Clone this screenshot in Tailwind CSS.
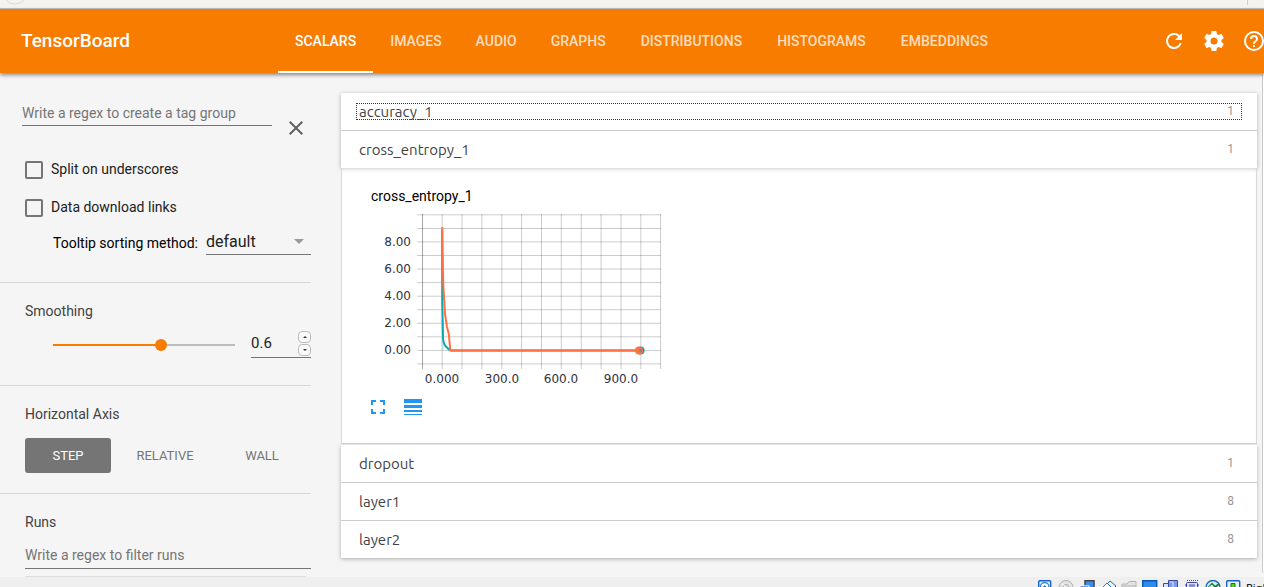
<!DOCTYPE html>
<html lang="en">
<head>
<meta charset="utf-8">
<title>TensorBoard</title>
<script src="https://cdn.jsdelivr.net/npm/@tailwindcss/browser@4"></script>
</head>
<body class="flex h-screen flex-col overflow-hidden bg-[#f5f5f5] font-[Roboto,sans-serif] text-sm text-[#212121]">
  <!-- browser chrome edge -->
  <div class="flex h-[9px] shrink-0 items-start justify-between overflow-hidden border-b border-[#c4c2be] bg-[#f4f3f1] pr-4 pl-1">
    <svg class="h-2 w-6" viewBox="0 0 24 8" fill="none" stroke="#dcdad7"><circle cx="11" cy="-8" r="12"/></svg>
    <span class="h-[5px] w-px bg-[#d0ceca]"></span>
  </div>

  <header class="relative z-10 flex h-16 shrink-0 bg-[#f77c00] text-white shadow-[0_2px_4px_rgba(0,0,0,0.45)]">
    <h1 class="flex w-[278px] shrink-0 items-center pl-[21px] text-[19px] font-medium">TensorBoard</h1>
    <nav class="flex font-medium text-white/75">
      <a href="#scalars" class="flex items-center border-b-2 border-white px-[17px] pt-0.5 text-white">SCALARS</a>
      <a href="#images" class="flex items-center px-[17px]">IMAGES</a>
      <a href="#audio" class="flex items-center px-[17px]">AUDIO</a>
      <a href="#graphs" class="flex items-center px-[17px]">GRAPHS</a>
      <a href="#distributions" class="flex items-center px-[18px]">DISTRIBUTIONS</a>
      <a href="#histograms" class="flex items-center px-[17px]">HISTOGRAMS</a>
      <a href="#embeddings" class="flex items-center px-[18px]">EMBEDDINGS</a>
    </nav>
    <div class="-mr-[10px] ml-auto flex items-center">
      <button aria-label="Reload" class="p-2"><svg class="size-6" viewBox="0 0 24 24" fill="currentColor"><path d="M17.65 6.35A7.96 7.96 0 0 0 12 4a8 8 0 1 0 7.73 10h-2.08A6 6 0 1 1 12 6c1.66 0 3.14.69 4.22 1.78L13 11h7V4z"/></svg></button>
      <button aria-label="Settings" class="p-2"><svg class="size-6" viewBox="0 0 24 24" fill="currentColor"><path d="M19.43 12.98c.04-.32.07-.64.07-.98s-.03-.66-.07-.98l2.11-1.65c.19-.15.24-.42.12-.64l-2-3.46c-.12-.22-.39-.3-.61-.22l-2.49 1c-.52-.4-1.08-.73-1.69-.98l-.38-2.65A.49.49 0 0 0 14 2h-4c-.25 0-.46.18-.49.42l-.38 2.65c-.61.25-1.17.59-1.69.98l-2.49-1c-.23-.09-.49 0-.61.22l-2 3.46c-.13.22-.07.49.12.64l2.11 1.65c-.04.32-.07.65-.07.98s.03.66.07.98l-2.11 1.65c-.19.15-.24.42-.12.64l2 3.46c.12.22.39.3.61.22l2.49-1c.52.4 1.08.73 1.69.98l.38 2.65c.03.24.24.42.49.42h4c.25 0 .46-.18.49-.42l.38-2.65c.61-.25 1.17-.59 1.69-.98l2.49 1c.23.09.49 0 .61-.22l2-3.46c.12-.22.07-.49-.12-.64zM12 15.5a3.5 3.5 0 1 1 0-7 3.5 3.5 0 0 1 0 7z"/></svg></button>
      <button aria-label="Help" class="p-2"><svg class="size-6" viewBox="0 0 24 24" fill="currentColor"><path d="M11 18h2v-2h-2zm1-16a10 10 0 1 0 0 20 10 10 0 0 0 0-20zm0 18a8 8 0 1 1 0-16 8 8 0 0 1 0 16zm0-14a4 4 0 0 0-4 4h2a2 2 0 1 1 4 0c0 2-3 1.75-3 5h2c0-2.25 3-2.5 3-5a4 4 0 0 0-4-4z"/></svg></button>
    </div>
  </header>

  <div class="flex min-h-0 flex-1">
    <aside class="w-[311px] shrink-0 overflow-hidden">
      <section class="h-[210px] border-b border-[#d8d8d8] pt-7">
        <div class="flex items-start pl-[22px]">
          <input aria-label="Tag group regex" placeholder="Write a regex to create a tag group" class="h-[25px] w-[250px] border-b border-[#757575] outline-none placeholder:text-[#757575]">
          <button aria-label="Clear" class="mt-[15px] ml-3"><svg class="size-6" viewBox="0 0 24 24" fill="#616161"><path d="M19 6.41 17.59 5 12 10.59 6.41 5 5 6.41 10.59 12 5 17.59 6.41 19 12 13.41 17.59 19 19 17.59 13.41 12z"/></svg></button>
        </div>
        <label class="mt-[21px] flex h-[18px] items-center gap-2 pl-[25px]"><input type="checkbox" class="size-[18px] appearance-none rounded-xs border-2 border-[#757575]"><span class="pb-0.5">Split on underscores</span></label>
        <label class="mt-5 flex h-[18px] items-center gap-2 pl-[25px]"><input type="checkbox" class="size-[18px] appearance-none rounded-xs border-2 border-[#757575]"><span class="pb-0.5">Data download links</span></label>
        <div class="mt-3 flex items-center pl-[53px]">
          <label for="sort" class="w-[153px] pt-0.5 text-black">Tooltip sorting method:</label>
          <div class="relative flex-1">
            <select id="sort" class="h-[26px] w-full appearance-none border-b border-[#757575] text-base leading-6 outline-none"><option>default</option></select>
            <svg class="pointer-events-none absolute top-0 right-0 size-6" viewBox="0 0 24 24" fill="#9a9a9a"><path d="m7 10 5 5 5-5z"/></svg>
          </div>
        </div>
      </section>

      <section class="h-[103px] border-b border-[#d8d8d8] pt-[18px]">
        <h3 class="pl-[25px] text-[#424242]">Smoothing</h3>
        <div class="mt-[9px] flex items-center gap-4 pl-[53px]">
          <input type="range" aria-label="Smoothing" min="0" max="1" step="0.1" value="0.6" class="mt-0.5 h-3 w-[182px] appearance-none bg-[linear-gradient(to_right,#f77c00_60%,#bdbdbd_60%)] bg-[length:100%_2px] bg-center bg-no-repeat [&::-webkit-slider-thumb]:size-3 [&::-webkit-slider-thumb]:appearance-none [&::-webkit-slider-thumb]:rounded-full [&::-webkit-slider-thumb]:bg-[#f77c00]">
          <div class="flex h-7 flex-1 items-center border-b border-[#757575]">
            <input type="number" aria-label="Smoothing value" value="0.6" step="0.1" class="w-0 flex-1 appearance-none text-[15px] outline-none [&::-webkit-inner-spin-button]:appearance-none">
            <div class="flex flex-col gap-px">
              <button aria-label="Increase" class="flex h-3 w-[13px] items-center justify-center rounded-sm border border-[#bdbdbd] bg-[#fafafa]"><svg class="h-1 w-1.5" viewBox="0 0 6 4" fill="#333"><path d="M3 1 5 3H1z"/></svg></button>
              <button aria-label="Decrease" class="flex h-3 w-[13px] items-center justify-center rounded-sm border border-[#bdbdbd] bg-[#fafafa]"><svg class="h-1 w-1.5" viewBox="0 0 6 4" fill="#333"><path d="M3 3 5 1H1z"/></svg></button>
            </div>
          </div>
        </div>
      </section>

      <section class="h-[108px] border-b border-[#d8d8d8] pt-[18px] pl-[25px]">
        <h3 class="text-[#424242]">Horizontal Axis</h3>
        <div class="mt-3.5 flex gap-[11px] text-[13px] text-[#757575]">
          <button class="h-[35px] w-[86px] rounded-[3px] bg-[#757575] pt-0.5 text-white">STEP</button>
          <button class="h-[35px] w-[86px] pt-0.5">RELATIVE</button>
          <button class="h-[35px] w-[86px] pt-0.5">WALL</button>
        </div>
      </section>

      <section class="pt-[18px] pl-[25px]">
        <h3 class="text-[#424242]">Runs</h3>
        <input aria-label="Filter runs" placeholder="Write a regex to filter runs" class="mt-2.5 h-[27px] w-full border-b border-[#757575] outline-none placeholder:text-[#757575]">
        <div class="mt-[7px] mr-[5px] h-px bg-[#dedede]"></div>
      </section>
    </aside>

    <main class="min-w-0 flex-1 pt-5 pr-[5px] pl-[30px] font-[Ubuntu,'Noto_Sans',sans-serif] text-[15px] text-[#424242]">
      <div class="flex flex-col gap-px bg-[#cccccc] shadow-[0_1px_4px_rgba(0,0,0,0.3)]">
        <h2 class="bg-white px-[15px] py-2.5"><button class="flex h-[17px] w-full items-center justify-between border border-dotted border-[#333] pr-[7px] pl-0.5 leading-4"><span>accuracy_1</span><span class="pb-0.5 font-[Roboto,sans-serif] text-xs text-[#999]">1</span></button></h2>
        <h2 class="bg-white px-[15px] py-2.5"><button class="flex h-[17px] w-full items-center justify-between border border-transparent pr-[7px] pl-0.5 leading-4"><span>cross_entropy_1</span><span class="pb-0.5 font-[Roboto,sans-serif] text-xs text-[#999]">1</span></button></h2>
      </div>

      <div class="mb-px h-[276px] border border-t-0 border-[#d8d8d8] bg-white pt-[18px] pl-[29px] font-[Roboto,sans-serif] shadow-[inset_0_4px_4px_-3px_rgba(0,0,0,0.2)]">
        <h3 class="text-sm leading-5 text-black">cross_entropy_1</h3>
        <svg class="h-[184px] w-[300px]" viewBox="371 206 300 184" role="img" aria-label="cross_entropy_1 by step">
          <g stroke="#000" stroke-opacity=".2" fill="none">
            <path stroke-opacity=".35" d="M422.5 214V369"/>
            <path d="M442.2 214V369M462 214V369M481.9 214V369M501.8 214V369M521.6 214V369M541.5 214V369M561.3 214V369M581.3 214V369M601.1 214V369M621 214V369M640.8 214V369M660.6 214V369"/>
            <path d="M417 214.8H661M417 228.5H661M417 241.9H661M417 255.5H661M417 269H661M417 282.6H661M417 296.2H661M417 309.7H661M417 323.3H661M417 336.8H661M417 350.4H661M417 363.9H661"/>
          </g>
          <g fill="none" stroke-width="2" stroke-linejoin="round">
            <path stroke="#b5dfe2" d="M442.5 320V350.4"/>
            <path stroke="#12a5b0" d="M442.2 230V300L443 338Q443.6 344 445.5 346L449 349.5 451 350.4H641"/>
            <path stroke="#ff7043" d="M442.3 227V240L443.3 285 445 314 447 327 448.8 334 450.3 350.4H639"/>
          </g>
          <circle cx="640.6" cy="350.4" r="4" fill="#12a5b0"/>
          <circle cx="639" cy="350.4" r="4" fill="#ff7043"/>
          <circle cx="640.6" cy="350.4" r="1.2" fill="#4d8f93"/>
          <g fill="#32313f" font-family="DejaVu Sans, sans-serif" font-size="12">
            <g text-anchor="end"><text x="411" y="246">8.00</text><text x="411" y="273">6.00</text><text x="411" y="300">4.00</text><text x="411" y="327">2.00</text><text x="411" y="354">0.00</text></g>
            <g text-anchor="middle"><text x="442" y="383">0.000</text><text x="502" y="383">300.0</text><text x="561" y="383">600.0</text><text x="621" y="383">900.0</text></g>
          </g>
        </svg>
        <div class="mt-2 flex items-start gap-[19px] text-[#2196f3]">
          <button aria-label="Toggle full size" class="pt-0.5"><svg class="size-3.5" viewBox="0 0 14 14" fill="currentColor"><path d="M0 0h5v2H2v3H0zM9 0h5v5h-2V2H9zM0 9h2v3h3v2H0zM12 9h2v5H9v-2h3z"/></svg></button>
          <button aria-label="Toggle log scale"><svg class="h-[18px] w-[18px]" viewBox="0 0 18 18" fill="currentColor"><path d="M0 1h18v4H0zM0 7h18v3H0zM0 12h18v2H0zM0 16h18v1H0z"/></svg></button>
        </div>
      </div>

      <div class="flex flex-col gap-px bg-[#cccccc] shadow-[0_1px_4px_rgba(0,0,0,0.3)]">
        <h2 class="bg-white px-[15px] py-2.5"><button class="flex h-[17px] w-full items-center justify-between border border-transparent pr-[7px] pl-0.5 leading-4"><span>dropout</span><span class="pb-0.5 font-[Roboto,sans-serif] text-xs text-[#999]">1</span></button></h2>
        <h2 class="bg-white px-[15px] py-2.5"><button class="flex h-[17px] w-full items-center justify-between border border-transparent pr-[7px] pl-0.5 leading-4"><span>layer1</span><span class="pb-0.5 font-[Roboto,sans-serif] text-xs text-[#999]">8</span></button></h2>
        <h2 class="bg-white px-[15px] py-2.5"><button class="flex h-[17px] w-full items-center justify-between border border-transparent pr-[7px] pl-0.5 leading-4"><span>layer2</span><span class="pb-0.5 font-[Roboto,sans-serif] text-xs text-[#999]">8</span></button></h2>
      </div>
    </main>
    <!-- page scroll edge -->
    <div class="mb-1 w-0.5 rounded-bl-sm border-l border-[#c8c8c8] bg-white"></div>
  </div>

  <!-- status bar -->
  <footer class="flex h-2.5 shrink-0 items-start justify-end overflow-hidden bg-[#efefef] pt-[3px] font-['Noto_Sans',sans-serif] text-[11px] leading-4 text-black">
    <svg class="h-4 w-[208px] shrink-0" viewBox="0 0 208 16" fill="none">
      <rect x=".7" y=".7" width="12" height="14" rx="1" fill="#d9ecfb" stroke="#1565c0" stroke-width="1.4"/><circle cx="6.7" cy="7" r="4.3" fill="#fff" stroke="#2a7fd4" stroke-width="1.3"/><circle cx="6.7" cy="7" r="1.5" fill="#1565c0"/>
      <circle cx="28" cy="7.5" r="7" fill="#e4e4e4" stroke="#b0b0b0"/><circle cx="28" cy="7.5" r="3" stroke="#aaa"/><path d="m24 4 3 2" stroke="#fff"/>
      <path d="M47 .8h9v9h-9z" fill="#3f8fe8" stroke="#444" stroke-width="1.5"/><path d="M42 5.8h9v8h-9z" fill="#1874dc" stroke="#fff"/>
      <path d="m66 7 6-6 6 5-6 6z" fill="#e8f3fc" stroke="#43627e"/><path d="m65 7 4-4 4 4-4 5z" fill="#fff" stroke="#1976d2"/>
      <path d="M84 4h5l2-2.5h7V14H84z" fill="#e3e3e3" stroke="#b4b4b4"/><path d="M84 6h14" stroke="#b4b4b4"/>
      <path d="M104.7.7h14v12h-14z" fill="#2c8cf0" stroke="#0a55ae" stroke-width="1.4"/>
      <path d="M130.5.5h9v11h-9z" fill="#7c9ae8" stroke="#3b4ba0"/><path d="M125.5 3.5h5v9h-5z" fill="#dbe4ff" stroke="#3b4ba0"/><path d="M132 2h3v6" stroke="#dbe4ff"/>
      <rect x="148.500" y="2.500" width="11" height="11" rx="1" fill="#dfe2fa" stroke="#3944a0"/><path d="M149 .5h11M147 5h1M160 5h1" stroke="#3944a0" stroke-dasharray="1 1"/><path d="M151 5h6M152 5v7M154 5v7M156 5v7" stroke="#5861b7"/>
      <circle cx="175" cy="7.500" r="7" fill="#d7effc" stroke="#1565c0" stroke-width="1.400"/><path d="m169 9 5-5 3 3 4-3" stroke="#17823b" stroke-width="2"/><path d="m170 8 4-3 2 3" stroke="#fff"/>
      <rect x="188.700" y=".700" width="13" height="14" rx="1" fill="#e2f1fd" stroke="#1565c0" stroke-width="1.400"/><path d="M193 3.500h4V8h3l-5 5-5-5h3z" fill="#5bd318" stroke="#21700c"/>
    </svg>
    <span class="w-[18px] shrink-0 overflow-hidden whitespace-nowrap">Right Ctrl</span>
  </footer>
</body>
</html>
